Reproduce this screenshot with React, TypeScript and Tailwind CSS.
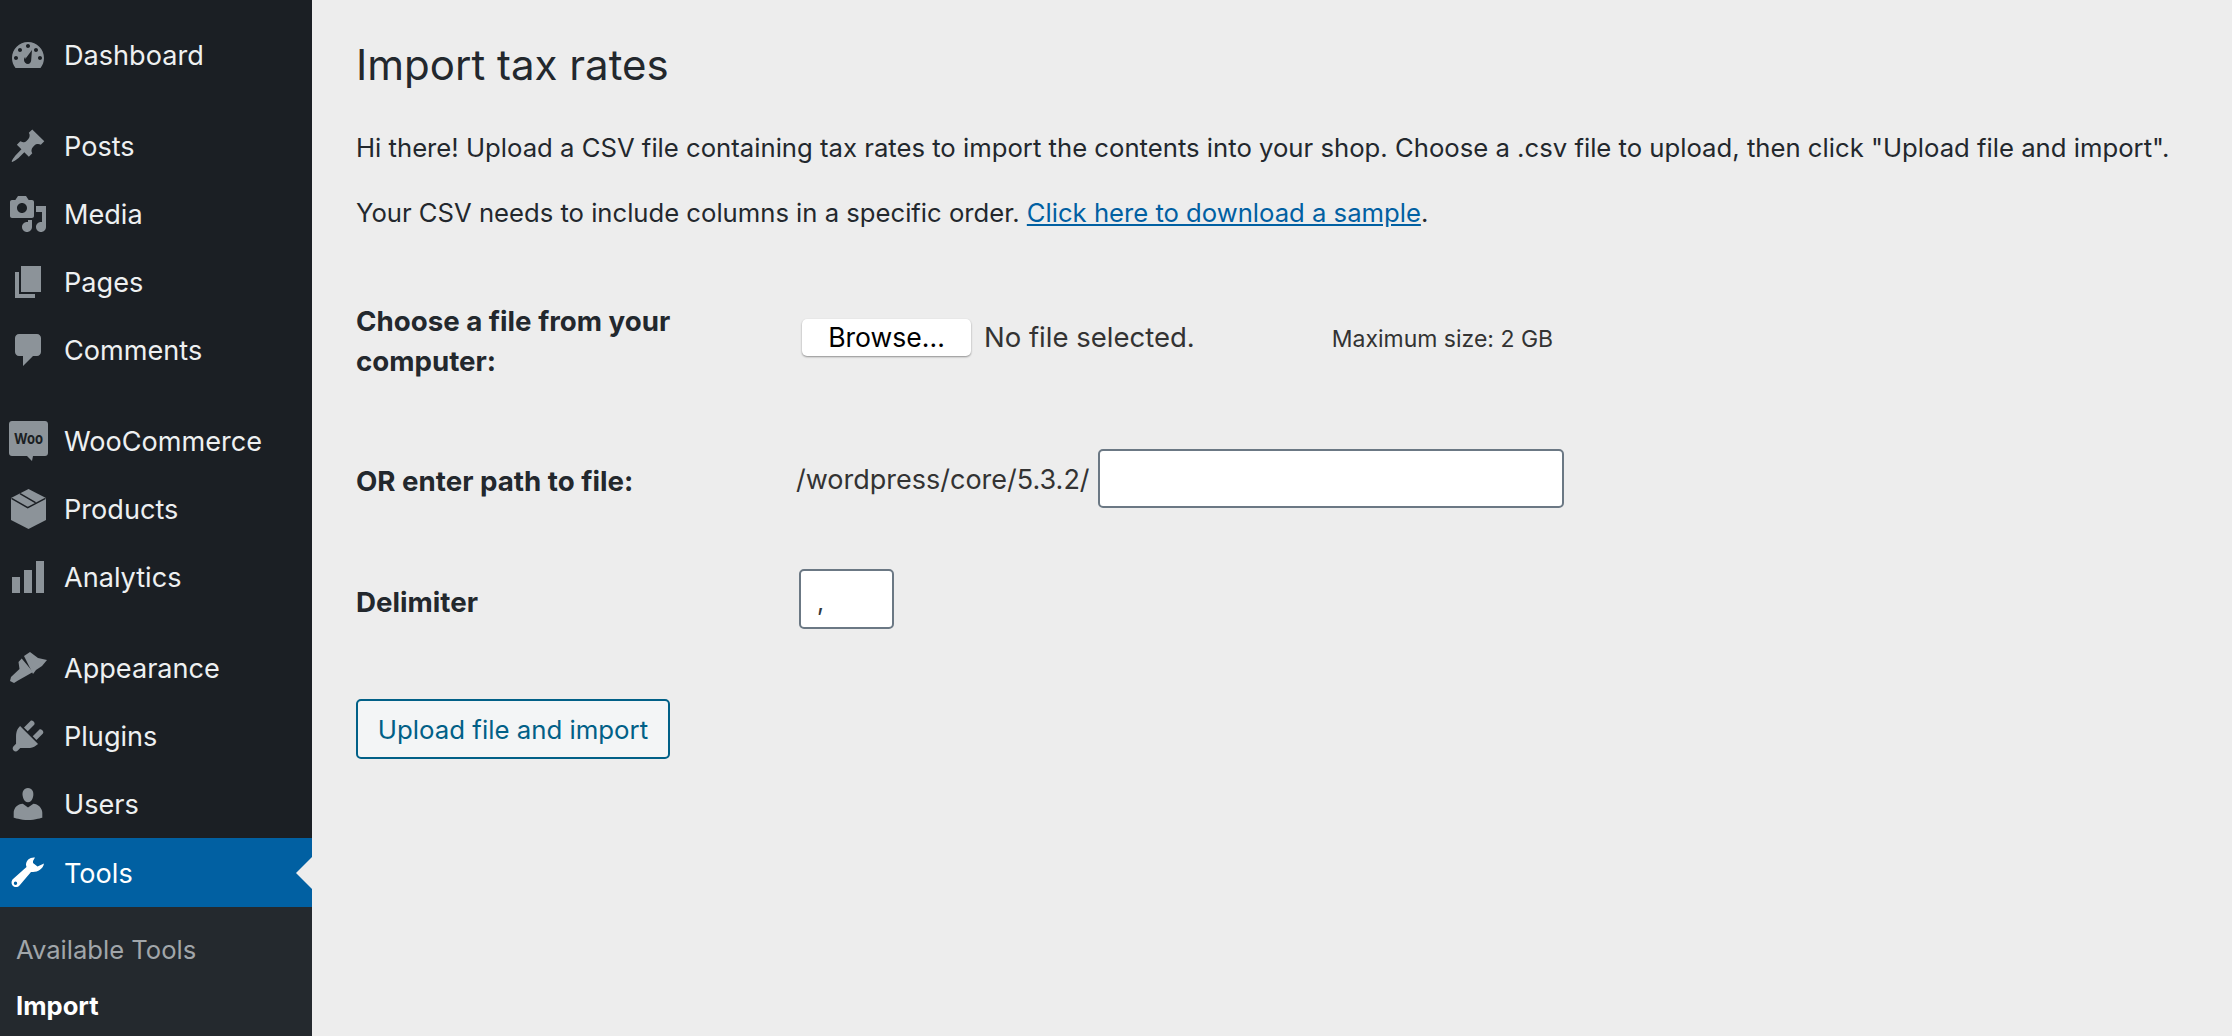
import React from 'react';

const ICON = 'fill-[#8c9399]';

const Dashboard = () => (
  <svg viewBox="2 3 16 13" className={`w-[32px] h-[26px] ${ICON}`}>
    <path fillRule="evenodd" d="M3.76 16h12.48c1.1-1.37 1.76-3.11 1.76-5 0-4.42-3.58-8-8-8s-8 3.58-8 8c0 1.89.66 3.63 1.76 5zM10 4c.55 0 1 .45 1 1s-.45 1-1 1-1-.45-1-1 .45-1 1-1zM6 6c.55 0 1 .45 1 1s-.45 1-1 1-1-.45-1-1 .45-1 1-1zm8 0c.55 0 1 .45 1 1s-.45 1-1 1-1-.45-1-1 .45-1 1-1zm-5.37 5.55L12 7l-.45 5.37c-.11.9-.78 1.63-1.55 1.63-1.1 0-2-.9-2-2 0-.57.24-1.08.63-1.45zM4 10c.55 0 1 .45 1 1s-.45 1-1 1-1-.45-1-1 .45-1 1-1zm12 0c.55 0 1 .45 1 1s-.45 1-1 1-1-.45-1-1 .45-1 1-1z" />
  </svg>
);

const Pin = () => (
  <svg viewBox="1 1 18 18" className={`w-[34px] h-[34px] ${ICON}`}>
    <path d="M10.44 3.02l1.82-1.82 6.36 6.35-1.83 1.82c-1.05-.68-2.48-.57-3.41.36l-.75.75c-.92.93-1.04 2.35-.35 3.41l-1.83 1.82-2.41-2.41-2.8 2.79c-.42.42-3.38 2.71-3.8 2.29s1.86-3.39 2.28-3.81l2.79-2.79L4.1 9.36l1.83-1.82c1.05.69 2.48.57 3.4-.36l.75-.75c.93-.92 1.05-2.35.36-3.41z" />
  </svg>
);

const Media = () => (
  <svg viewBox="1 1 18 18" className={`w-[36px] h-[36px] ${ICON}`}>
    <path fillRule="evenodd" d="M13 11V4c0-.55-.45-1-1-1h-1.67L9 1H5L3.67 3H2c-.55 0-1 .45-1 1v7c0 .55.45 1 1 1h10c.55 0 1-.45 1-1zM7 4.5c1.38 0 2.5 1.12 2.5 2.5S8.38 9.5 7 9.5 4.5 8.38 4.5 7 5.62 4.5 7 4.5zM14 6h5v10.5c0 1.38-1.12 2.5-2.5 2.5S14 17.88 14 16.5s1.12-2.5 2.5-2.5c.17 0 .34.02.5.05V9h-3V6zm-4 8.05V13h2v3.5c0 1.38-1.12 2.5-2.5 2.5S7 17.88 7 16.5 8.12 14 9.5 14c.17 0 .34.02.5.05z" />
  </svg>
);

const Pages = () => (
  <svg viewBox="3 2 13 16" className={`w-[26px] h-[32px] ${ICON}`}>
    <path d="M6 15V2h10v13H6zm-1 1h8v2H3V5h2v11z" />
  </svg>
);

const Comments = () => (
  <svg viewBox="3 2 13 16" className={`w-[26px] h-[32px] ${ICON}`}>
    <path d="M5 2h9c1.1 0 2 .9 2 2v7c0 1.1-.9 2-2 2h-2l-5 5v-5H5c-1.1 0-2-.9-2-2V4c0-1.1.9-2 2-2z" />
  </svg>
);

const Woo = () => (
  <svg viewBox="0 0 39 40" className="w-[39px] h-[40px]">
    <path className={ICON} d="M3 0h33c1.7 0 3 1.3 3 3v29c0 1.700-1.300 3-3 3H24l-1 5-5-5H3c-1.700 0-3-1.300-3-3V3c0-1.700 1.300-3 3-3z" />
    <text x="19.500" y="23" textAnchor="middle" fontSize="15" fontWeight="700" fill="#1b1f24" fontFamily="Inter, sans-serif" textLength="29" lengthAdjust="spacingAndGlyphs">Woo</text>
  </svg>
);

const Box = () => (
  <svg viewBox="0 0 35 40" className="w-[35px] h-[40px]">
    <path className={ICON} d="M17.500 0 35 9V31L17.500 40 0 31V9Z" />
    <path d="M0.500 9.300 16.700 18.700 34.500 9.300M9 4.700 24.500 13.700" fill="none" stroke="#1b1f24" strokeWidth="1.500" />
  </svg>
);

const Analytics = () => (
  <svg viewBox="0 0 32 32" className={`w-[32px] h-[32px] ${ICON}`}>
    <path d="M0 16h8v16H0zM12 9h8v23h-8zM24 0h8v32h-8z" />
  </svg>
);

const Brush = () => (
  <svg viewBox="9 10 38 34" className={`w-[38px] h-[34px] ${ICON}`}>
    <path d="M24 15 30 11 38 17 47 19 42 25 36 29 33 33Z" />
    <path d="M18.500 21 21.700 17.500 33 31 26 35 18 39.500 14 42 10 40 11 36 19.500 28Z" />
  </svg>
);

const Plug = () => (
  <svg viewBox="2 2 16 16" className={`w-[32px] h-[32px] ${ICON}`}>
    <path d="M13.11 4.36L9.87 7.6 8 5.73l3.24-3.24c.35-.34 1.05-.2 1.56.32.52.51.66 1.21.31 1.55zm-8 1.77l.91-1.12 9.01 9.01-1.19.84c-.71.71-2.63 1.16-3.82 1.16H6.14L4.9 17.26c-.59.59-1.54.59-2.12 0-.59-.58-.59-1.53 0-2.12l1.24-1.24v-3.88c0-1.13.4-3.18 1.09-3.89zm7.26 3.97l3.24-3.24c.34-.35 1.04-.21 1.55.31.52.51.66 1.21.31 1.55l-3.24 3.25z" />
  </svg>
);

const User = () => (
  <svg viewBox="2.500 2 15 16.200" className={`w-[30px] h-[32px] ${ICON}`}>
    <path d="M10 9.25c-2.27 0-2.73-3.44-2.73-3.44C7 4.02 7.82 2 9.970 2c2.16 0 2.980 2.020 2.710 3.810 0 0-.41 3.440-2.680 3.440zm0 2.570L12.720 10c2.390 0 4.520 2.330 4.520 4.530v2.490s-3.650 1.130-7.240 1.130c-3.650 0-7.240-1.130-7.240-1.130v-2.490c0-2.250 1.940-4.500 4.620-4.500z" />
  </svg>
);

const Wrench = () => (
  <svg viewBox="11 6 34 33" className="w-[34px] h-[33px] fill-white">
    <path fillRule="evenodd" d="M35 7.500C30 7 26 10 26 15L26.500 17 13 29C10 32 12 37 16 37 17.500 37 18.500 36.500 19.500 35.500L31 22 33 22C38 22 43 19 44 13.500L37.500 16.500 33 13 33 11ZM15.500 31.500A1.700 1.700 0 1 0 15.500 34.900 1.700 1.700 0 1 0 15.500 31.500Z" />
  </svg>
);

const MENU = [
  [
    { label: 'Dashboard', icon: <Dashboard /> },
  ],
  [
    { label: 'Posts', icon: <Pin /> },
    { label: 'Media', icon: <Media /> },
    { label: 'Pages', icon: <Pages /> },
    { label: 'Comments', icon: <Comments /> },
  ],
  [
    { label: 'WooCommerce', icon: <Woo /> },
    { label: 'Products', icon: <Box /> },
    { label: 'Analytics', icon: <Analytics /> },
  ],
  [
    { label: 'Appearance', icon: <Brush /> },
    { label: 'Plugins', icon: <Plug /> },
    { label: 'Users', icon: <User /> },
  ],
];

function MenuRow({ label, icon }: { label: string; icon: React.ReactNode }) {
  return (
    <div className="flex items-center h-[68px] text-[27.100px] text-[#eef0f1]">
      <div className="w-[56px] mr-[8px] flex justify-center shrink-0">{icon}</div>
      <span className="pt-[3px]">{label}</span>
    </div>
  );
}

function Sidebar() {
  return (
    <aside className="w-[312px] h-full shrink-0 bg-[#1b1f24] flex flex-col pt-[21px]">
      <div className="flex flex-col gap-[23px]">
        {MENU.map((group, i) => (
          <div key={i} className="flex flex-col">
            {group.map(item => <MenuRow key={item.label} {...item} />)}
          </div>
        ))}
      </div>
      <div className="relative flex items-center h-[69px] bg-[#0160a2] text-[27.100px] text-white">
        <div className="w-[56px] mr-[8px] flex justify-center shrink-0"><Wrench /></div>
        <span className="pt-[3px]">Tools</span>
        {/* current page pointer */}
        <div className="absolute right-0 top-[19px] w-0 h-0 border-y-[16px] border-y-transparent border-r-[16px] border-r-[#ededed]" />
      </div>
      <div className="flex-1 bg-[#24292e] pl-[16px] pt-[24px] text-[25.600px]">
        <div className="text-[#a1a6aa] h-[38px] leading-[38px]">Available Tools</div>
        <div className="text-white font-bold h-[38px] leading-[38px] mt-[18px]">Import</div>
      </div>
    </aside>
  );
}

export default function App() {
  return (
    <div className="flex w-full h-screen overflow-hidden bg-[#ededed] font-['Inter',sans-serif] text-[#23282d]">
      <Sidebar />
      <main className="flex-1 pl-[44px] pt-[41px] text-[25.700px]">
        <h1 className="text-[42px] leading-[48px] font-normal">Import tax rates</h1>
        <p className="mt-[40px] leading-[38px] whitespace-nowrap">
          Hi there! Upload a CSV file containing tax rates to import the contents into your shop. Choose a .csv file to upload, then click "Upload file and import".
        </p>
        <p className="mt-[27px] leading-[38px] whitespace-nowrap text-[25.650px]">
          Your CSV needs to include columns in a specific order. <a className="text-[#0160a2] underline" href="#">Click here to download a sample</a>.
        </p>

        <div className="flex flex-col mt-[69px]">
          <div className="flex items-start h-[80px]">
            <label className="w-[440px] font-bold text-[27.700px] leading-[40px]">Choose a file from your<br />computer:</label>
            <div className="flex items-center pl-[6px] pt-[16px]">
              <button className="w-[169px] h-[37px] bg-white rounded-[5px] shadow-[0_1px_2px_rgba(0,0,0,0.4)] text-black text-[26.600px] leading-[37px]">Browse...</button>
              <span className="ml-[13px] text-[27.500px] text-[#333333]">No file selected.</span>
              <span className="ml-[137px] text-[23px] text-[#333333] pt-[4px]">Maximum size: 2 GB</span>
            </div>
          </div>

          <div className="flex items-center h-[59px] mt-[68px]">
            <label className="w-[440px] font-bold text-[27.700px] pt-[6px]">OR enter path to file:</label>
            <span className="text-[27px] text-[#333333] pt-[3px]">/wordpress/core/5.3.2/</span>
            <input className="ml-[8px] w-[466px] h-[59px] bg-white border-2 border-[#6b7884] rounded-[5px]" />
          </div>

          <div className="flex items-center h-[60px] mt-[61px]">
            <label className="w-[440px] font-bold text-[27.700px] pt-[8px]">Delimiter</label>
            <input defaultValue="," className="ml-[3px] w-[95px] h-[60px] bg-white border-2 border-[#6b7884] rounded-[5px] px-[16px] pt-[6px] text-[25px] text-[#32373c]" />
          </div>

          <button className="mt-[70px] self-start w-[314px] h-[60px] bg-[#f3f5f6] border-2 border-[#016087] rounded-[5px] text-[#016087] text-[25.800px] pt-[2px]">
            Upload file and import
          </button>
        </div>
      </main>
    </div>
  );
}
